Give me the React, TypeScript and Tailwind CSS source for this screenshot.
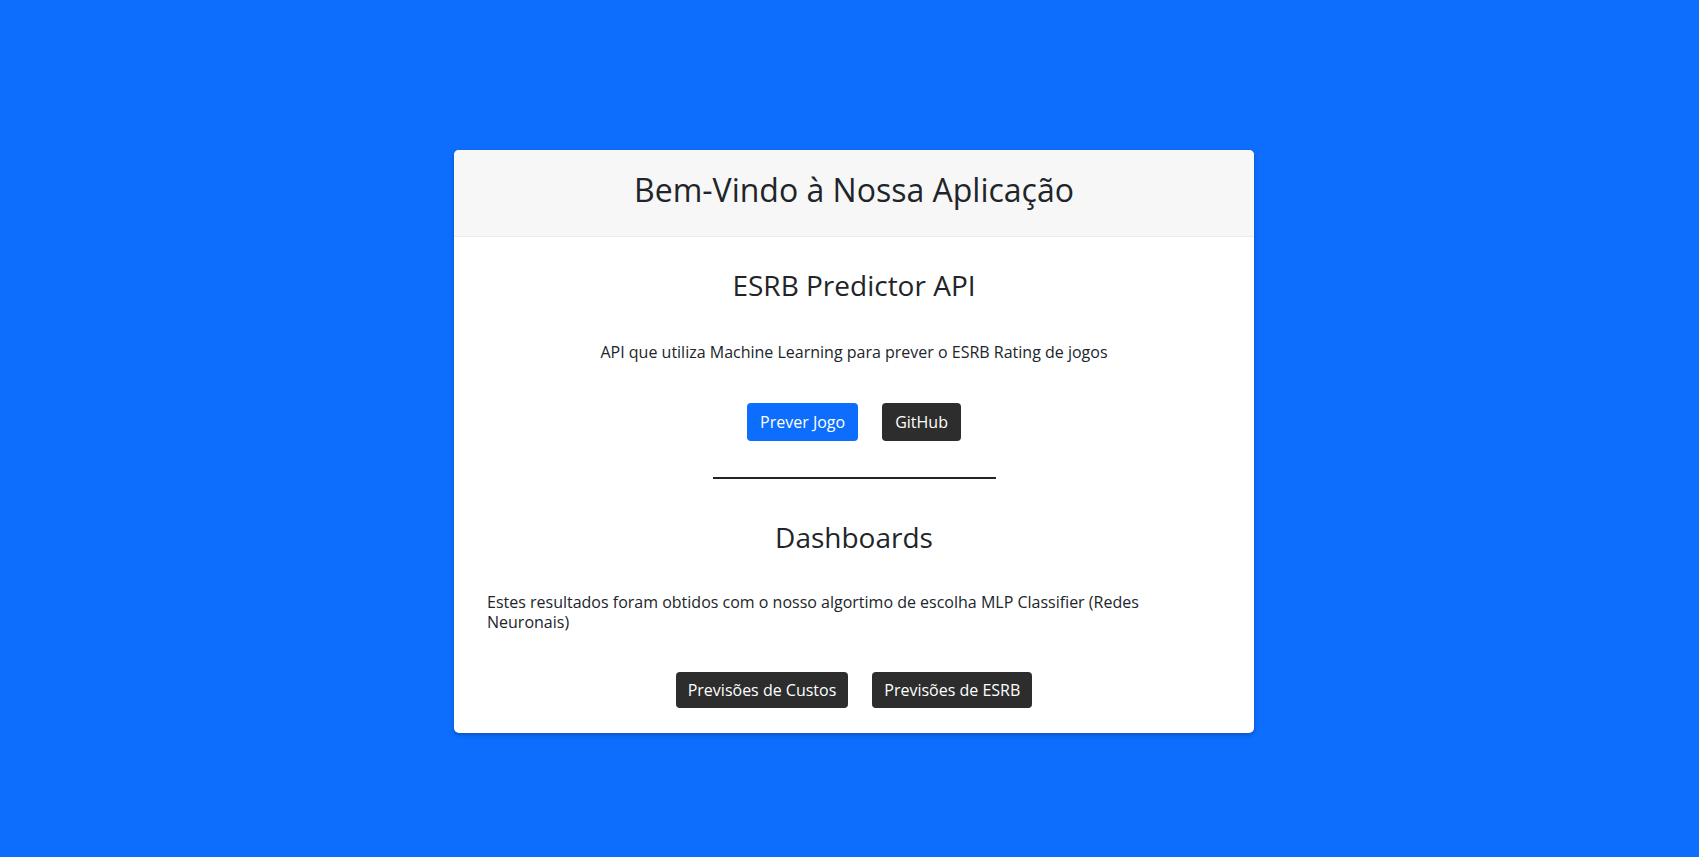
export default function App() {
	return (
		<div className="min-h-screen w-full bg-[#0d6efd] flex justify-center pl-[9px] pt-[150px] font-['Open_Sans',sans-serif] text-[#212529]">
			<div className="w-[800px] h-[583px] bg-white rounded-[5px] shadow-[0_2px_4px_rgba(0,0,0,0.25)] overflow-hidden flex flex-col">
				<div className="h-[87px] bg-[#f7f7f7] border-b border-[#ebebeb] flex justify-center pt-[21px]">
					<h2 className="text-[32px] leading-[1.2] font-normal">Bem-Vindo à Nossa Aplicação</h2>
				</div>
				<div className="flex flex-col items-center px-[33px] pt-[32px]">
					<h3 className="text-[28px] leading-[1.2]">ESRB Predictor API</h3>
					<p className="mt-[37px] text-base leading-6">
						API que utiliza Machine Learning para prever o ESRB Rating de jogos
					</p>
					<div className="mt-[39px] flex gap-[24px]">
						<button className="h-[38px] px-[13px] rounded-[4px] bg-[#0d6efd] text-white text-base">
							Prever Jogo
						</button>
						<button className="h-[38px] px-[13px] rounded-[4px] bg-[#2d2d2d] text-white text-base">
							GitHub
						</button>
					</div>
					<div className="mt-[36px] w-[283px] h-[2px] bg-[#212529]" />
					<h3 className="mt-[42px] text-[28px] leading-[1.2]">Dashboards</h3>
					<p className="self-start mt-[38px] w-[700px] text-base leading-[20px]">
						Estes resultados foram obtidos com o nosso algortimo de escolha MLP Classifier (Redes Neuronais)
					</p>
					<div className="mt-[40px] flex gap-[24px]">
						<button className="h-[36px] px-3 rounded-[4px] bg-[#2d2d2d] text-white text-base">
							Previsões de Custos
						</button>
						<button className="h-[36px] px-3 rounded-[4px] bg-[#2d2d2d] text-white text-base">
							Previsões de ESRB
						</button>
					</div>
				</div>
			</div>
		</div>
	)
}
